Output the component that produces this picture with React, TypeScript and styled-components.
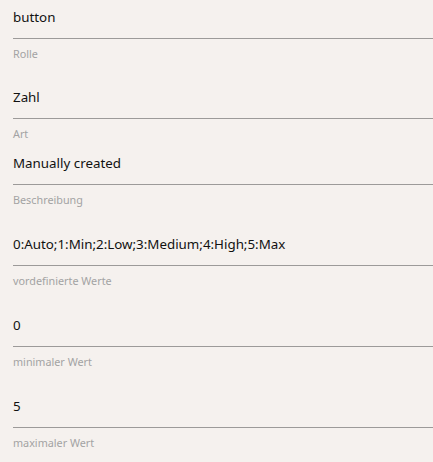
import React from "react";
import styled, { createGlobalStyle } from "styled-components";

const Global = createGlobalStyle`
  html, body { margin: 0; padding: 0; background: #f5f1ee; }
  body { font-family: "Noto Sans", "Open Sans", sans-serif; }
`;

const Page = styled.div`
  width: 433px;
  height: 462px;
  background: #f5f1ee;
  padding-left: 13px;
  box-sizing: border-box;
  display: flex;
  flex-direction: column;
  overflow: hidden;
`;

const Field = styled.div<{ $after: number }>`
  display: flex;
  flex-direction: column;
  margin-bottom: ${(p) => p.$after}px;
`;

const Value = styled.div`
  padding: 7px 0 11px 0;
  line-height: 20px;
  font-size: 13.35px;
  color: #111;
  border-bottom: 1px solid #9c9a99;
`;

const Label = styled.div`
  margin-top: 7px;
  line-height: 16px;
  font-size: 10.8px;
  color: #a3a3a3;
`;

const fields = [
  { value: "button", label: "Rolle", after: 18 },
  { value: "Zahl", label: "Art", after: 4 },
  { value: "Manually created", label: "Beschreibung", after: 19 },
  { value: "0:Auto;1:Min;2:Low;3:Medium;4:High;5:Max", label: "vordefinierte Werte", after: 19 },
  { value: "0", label: "minimaler Wert", after: 19 },
  { value: "5", label: "maximaler Wert", after: 19 },
];

export default function App() {
  return (
    <>
      <Global />
      <Page>
        {fields.map((f) => (
          <Field key={f.label} $after={f.after}>
            <Value>{f.value}</Value>
            <Label>{f.label}</Label>
          </Field>
        ))}
      </Page>
    </>
  );
}
